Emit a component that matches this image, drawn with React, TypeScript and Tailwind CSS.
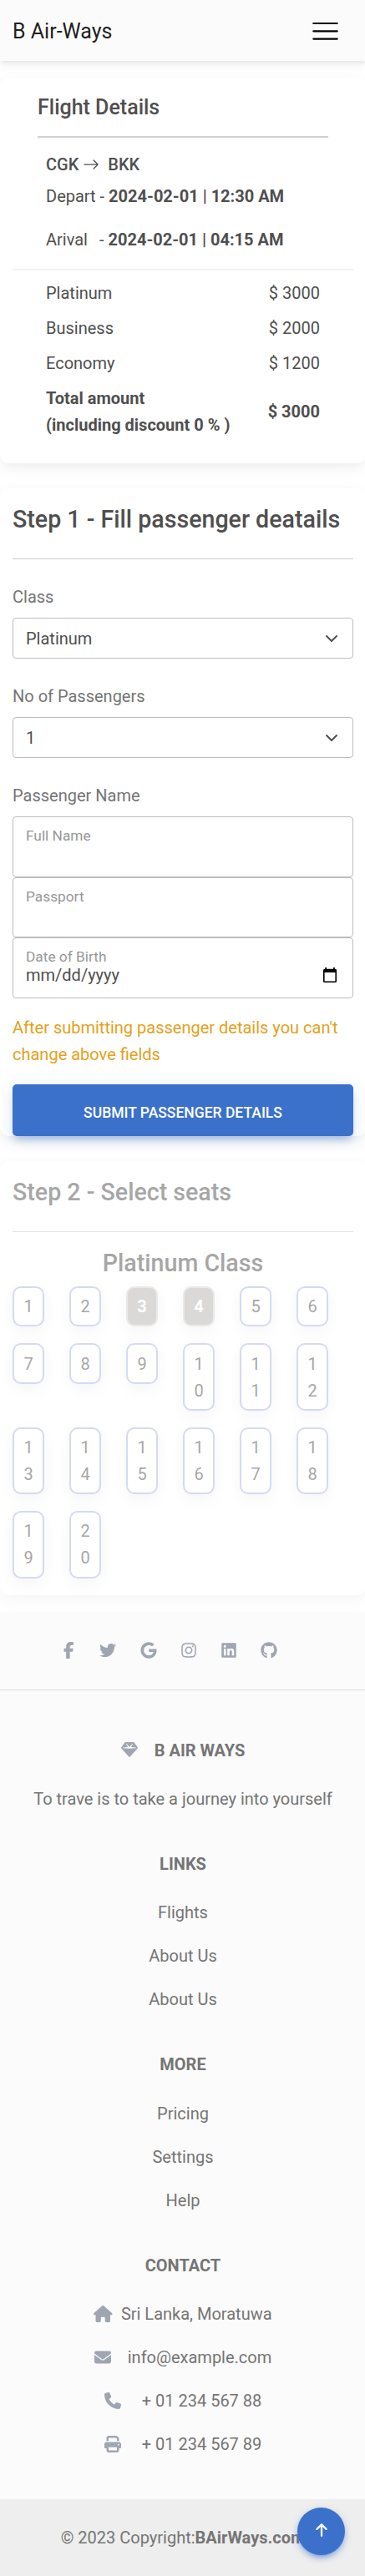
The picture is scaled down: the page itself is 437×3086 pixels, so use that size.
import type { ReactNode } from "react";
import {
  FaArrowUp,
  FaEnvelope,
  FaFacebookF,
  FaGem,
  FaGithub,
  FaGoogle,
  FaHouse,
  FaInstagram,
  FaLinkedin,
  FaPhone,
  FaPrint,
  FaTwitter,
} from "react-icons/fa6";
import { BsArrowRight } from "react-icons/bs";

const CARD =
  "rounded-[10px] bg-white shadow-[0_2px_15px_-3px_rgba(0,0,0,0.07),0_10px_20px_-2px_rgba(0,0,0,0.04)]";

const fares = [
  ["Platinum", "$ 3000"],
  ["Business", "$ 2000"],
  ["Economy", "$ 1200"],
];

const taken = [3, 4];
const seats = Array.from({ length: 20 }, (_, i) => i + 1);

function Navbar() {
  return (
    <nav className="relative flex h-[73px] items-center justify-between bg-[#fbfbfb] pr-[33px] pl-[15px] shadow-[0_4px_12px_0_rgba(0,0,0,0.07),0_2px_4px_rgba(0,0,0,0.05)]">
      <span className="pt-[2px] text-[25px] leading-[38px] text-black/90">B Air-Ways</span>
      <button aria-label="Menu">
        <svg width="31" height="23" viewBox="0 0 31 23" stroke="#000" strokeWidth="2.2" strokeLinecap="round">
          <path d="M1.3 3h28.4M1.3 12.300h28.4M1.3 21.600h28.4" />
        </svg>
      </button>
    </nav>
  );
}

function FlightDetails() {
  return (
    <section className={`mt-5 h-[462px] px-[15px] ${CARD}`}>
      <div className="px-[30px] pt-[21px]">
        <h4 className="h-[49px] text-[25px] leading-[29px] font-medium">Flight Details</h4>
        <div className="h-[2px] bg-[#d0d0d0]" />
      </div>
      <div className="h-[157px] px-10 pt-[15px]">
        <p className="flex items-center font-medium">
          <span className="pt-px">CGK</span>
          <BsArrowRight className="mr-[10px] ml-[5px]" size={20} />
          <span className="pt-px">BKK</span>
        </p>
        <p className="mt-[6px]">
          Depart - <b className="font-bold">2024-02-01 | 12:30 AM</b>
        </p>
        <p className="mt-5 flex">
          <span className="w-[64px]">Arival</span>
          <span className="whitespace-pre">- </span>
          <b className="font-bold">2024-02-01 | 04:15 AM</b>
        </p>
      </div>
      <div className="h-[2px] bg-[#f3f3f3]" />
      <div className="flex flex-col gap-[10px] pt-[11px] pr-10 pl-10">
        {fares.map(([name, price]) => (
          <div key={name} className="flex justify-between">
            <span>{name}</span>
            <span>{price}</span>
          </div>
        ))}
        <div className="flex items-center justify-between font-bold">
          <span>
            Total amount
            <br />
            (including discount 0 % )
          </span>
          <span>$ 3000</span>
        </div>
      </div>
    </section>
  );
}

function SelectBox({ label, value }: { label: string; value: string }) {
  return (
    <div className="h-[119px]">
      <div className="text-[#757575]">{label}</div>
      <div className="mt-[9px] flex h-[49px] items-center justify-between rounded-[4px] border border-[#bdbdbd] pr-[17px] pl-[15px]">
        <span>{value}</span>
        <svg width="16" height="16" viewBox="0 0 16 16" fill="none" stroke="#4f4f4f" strokeWidth="2" strokeLinecap="round" strokeLinejoin="round">
          <path d="M2 5l6 6 6-6" />
        </svg>
      </div>
    </div>
  );
}

function Field({ label, children }: { label: string; children?: ReactNode }) {
  return (
    <div className="h-[72.5px] rounded-[4px] border border-[#bdbdbd] px-[15px] pt-[9px]">
      <div className="text-[17.3px] leading-[27px] text-[#979797]">{label}</div>
      {children}
    </div>
  );
}

function PassengerForm() {
  return (
    <section className={`mt-[30px] h-[776px] px-[15px] ${CARD}`}>
      <h3 className="h-[84px] pt-5 text-[28.6px] leading-[34px] font-medium whitespace-nowrap">
        Step 1 - Fill passenger deatails
      </h3>
      <div className="mb-[30px] h-px bg-[#cacaca]" />
      <div className="-mt-px">
        <SelectBox label="Class" value="Platinum" />
        <SelectBox label="No of Passengers" value="1" />
        <div className="mb-[9px] text-[#757575]">Passenger Name</div>
        <Field label="Full Name" />
        <Field label="Passport" />
        <Field label="Date of Birth">
          <div className="-mt-2 flex items-center justify-between">
            <span>mm/dd/yyyy</span>
            <svg className="mr-1" width="16" height="18" viewBox="0 0 16 18">
              <path fill="#000" fillRule="evenodd" d="M2.200 0h1.800v1.800h8V0h1.800v1.800h.7A1.500 1.500 0 0 1 16 3.300v13.200a1.500 1.500 0 0 1-1.500 1.500h-13A1.500 1.500 0 0 1 0 16.500V3.300A1.500 1.500 0 0 1 1.500 1.800h.7zM1.600 6v10.400h12.800V6z" />
            </svg>
          </div>
        </Field>
      </div>
      <p className="mt-[19px] text-[#e4a11b]">After submitting passenger details you can't change above fields</p>
      <button className="mt-5 flex h-[62px] w-full items-center justify-center rounded-[5px] bg-[#3b71ca] pt-[7px] text-[17.5px] leading-[28px] font-medium text-white uppercase shadow-[0_8px_9px_-4px_rgba(59,113,202,0.3),0_4px_18px_0_rgba(59,113,202,0.2)]">
        Submit passenger details
      </button>
    </section>
  );
}

function Seat({ n }: { n: number }) {
  const look = taken.includes(n)
    ? "border-[#d5d5d5] bg-[#b7b5b3] font-bold text-white"
    : "border-[#adb7e6] bg-white";
  return (
    <div
      className={`w-[38px] rounded-[10px] border-2 px-[11px] py-[6.200px] text-center break-all shadow-[0_2px_15px_-3px_rgba(0,0,0,0.07),0_10px_20px_-2px_rgba(0,0,0,0.04)] ${look}`}
    >
      {n}
    </div>
  );
}

function SeatPicker() {
  return (
    <section className={`mt-[30px] h-[520px] px-[15px] opacity-50 ${CARD}`}>
      <h3 className="h-[84px] pt-5 text-[28.6px] leading-[34px] font-medium">Step 2 - Select seats</h3>
      <div className="h-px bg-[#cacaca]" />
      <h3 className="h-[65px] pt-5 text-center text-[28.6px] leading-[34px] font-medium">Platinum Class</h3>
      <div className="grid grid-cols-[repeat(6,38px)] items-start gap-x-[30px] gap-y-5">
        {seats.map((n) => (
          <Seat key={n} n={n} />
        ))}
      </div>
    </section>
  );
}

function LinkGroup({ title, links }: { title: string; links: string[] }) {
  return (
    <div>
      <h6 className="font-bold">{title}</h6>
      <ul className="mt-[26.4px] flex flex-col gap-5">
        {links.map((l, i) => (
          <li key={i}>{l}</li>
        ))}
      </ul>
    </div>
  );
}

function Footer() {
  return (
    <footer className="mt-5 bg-[#fbfbfb] text-center text-[#757575]">
      <div className="flex h-[94px] items-center border-b border-[#dedede] pb-[2px] pl-[76px] text-[20px] text-[#9fa6b2]">
        <FaFacebookF className="w-[12.500px]" />
        <FaTwitter className="ml-[30px]" />
        <FaGoogle className="ml-[29px] w-[20px]" />
        <FaInstagram className="ml-[29px] w-[18px]" />
        <FaLinkedin className="ml-[30px] w-[18px]" />
        <FaGithub className="ml-[29px]" />
      </div>
      <div className="h-[969px] pt-[56px]">
        <h6 className="flex items-center justify-center font-bold">
          <FaGem className="mr-5 -mt-[3px] text-[#9fa6b2]" size={20} />B AIR WAYS
        </h6>
        <p className="mt-[26px] mb-[46px]">To trave is to take a journey into yourself</p>
        <LinkGroup title="LINKS" links={["Flights", "About Us", "About Us"]} />
        <div className="h-[46px]" />
        <LinkGroup title="MORE" links={["Pricing", "Settings", "Help"]} />
        <div className="h-[46px]" />
        <h6 className="font-bold">CONTACT</h6>
        <ul className="mt-[26.4px] flex flex-col gap-5">
          <li className="flex items-center justify-center">
            <FaHouse className="mr-[10px] -mt-px w-[22.500px] text-[#9fa6b2]" size={20} />
            Sri Lanka, Moratuwa
          </li>
          <li className="flex items-center justify-center">
            <FaEnvelope className="mr-5 -mt-px text-[#9fa6b2]" size={20} />
            info@example.com
          </li>
          <li className="flex items-center justify-center">
            <FaPhone className="mr-[25px] -mt-px text-[#9fa6b2]" size={20} />
            + 01 234 567 88
          </li>
          <li className="flex items-center justify-center">
            <FaPrint className="mr-[25px] -mt-px text-[#9fa6b2]" size={20} />
            + 01 234 567 89
          </li>
        </ul>
      </div>
      <div className="relative h-[92px] bg-[#eeeeee] pt-[30px]">
        © 2023 Copyright:<b className="font-bold">BAirWays.com</b>
        <button
          aria-label="Back to top"
          className="absolute top-[10px] right-[25px] flex size-[57px] items-center justify-center rounded-full bg-[#3b71ca] pb-[3px] text-white shadow-[0_4px_9px_-4px_rgba(59,113,202,0.9),0_3px_10px_0_rgba(59,113,202,0.25)]"
        >
          <FaArrowUp size={18} />
        </button>
      </div>
    </footer>
  );
}

export default function App() {
  return (
    <div className="w-full overflow-hidden bg-white font-['Roboto',sans-serif] text-[20px] leading-[32px] text-[#4f4f4f]">
      <div className="w-[438px]">
        <Navbar />
        <FlightDetails />
        <PassengerForm />
        <SeatPicker />
        <Footer />
      </div>
    </div>
  );
}
